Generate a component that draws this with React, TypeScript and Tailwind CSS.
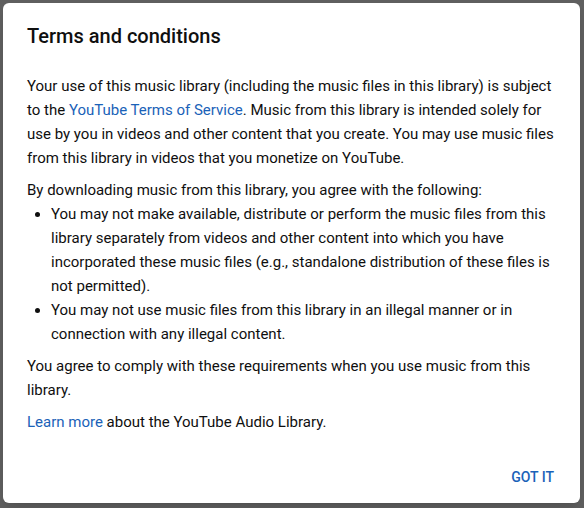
export default function App() {
  return (
    <div className="h-[508px] w-[584px] bg-[#5f5f5f] pl-[3px] pt-[3px] font-['Roboto',sans-serif]">
      <div className="flex h-[500px] w-[577px] flex-col rounded-[6px] bg-white shadow-lg">
        <div className="px-6 pt-[19px]">
          <h2 className="text-[20px] font-medium leading-[28px] text-[#0f0f0f]">Terms and conditions</h2>
          <div className="mt-6 text-[15px] leading-6 text-[#0f0f0f]">
            <p>
              Your use of this music library (including the music files in this library) is subject to the{" "}
              <a className="text-[#1a62b8]">YouTube Terms of Service</a>. Music from this library is intended solely for
              use by you in videos and other content that you create. You may use music files from this library in
              videos that you monetize on YouTube.
            </p>
            <p className="mt-2">By downloading music from this library, you agree with the following:</p>
            <ul className="list-disc pl-6">
              <li>
                You may not make available, distribute or perform the music files from this library separately from
                videos and other content into which you have incorporated these music files (e.g., standalone
                distribution of these files is not permitted).
              </li>
              <li>
                You may not use music files from this library in an illegal manner or in connection with any illegal
                content.
              </li>
            </ul>
            <p className="mt-2">You agree to comply with these requirements when you use music from this library.</p>
            <p className="mt-2">
              <a className="text-[#1a62b8]">Learn more</a> about the YouTube Audio Library.
            </p>
          </div>
        </div>
        <div className="mt-auto flex justify-end pb-2 pr-[10px]">
          <button className="px-4 py-2 text-[14px] font-medium uppercase leading-5 text-[#1a62b8]">Got it</button>
        </div>
      </div>
    </div>
  );
}
